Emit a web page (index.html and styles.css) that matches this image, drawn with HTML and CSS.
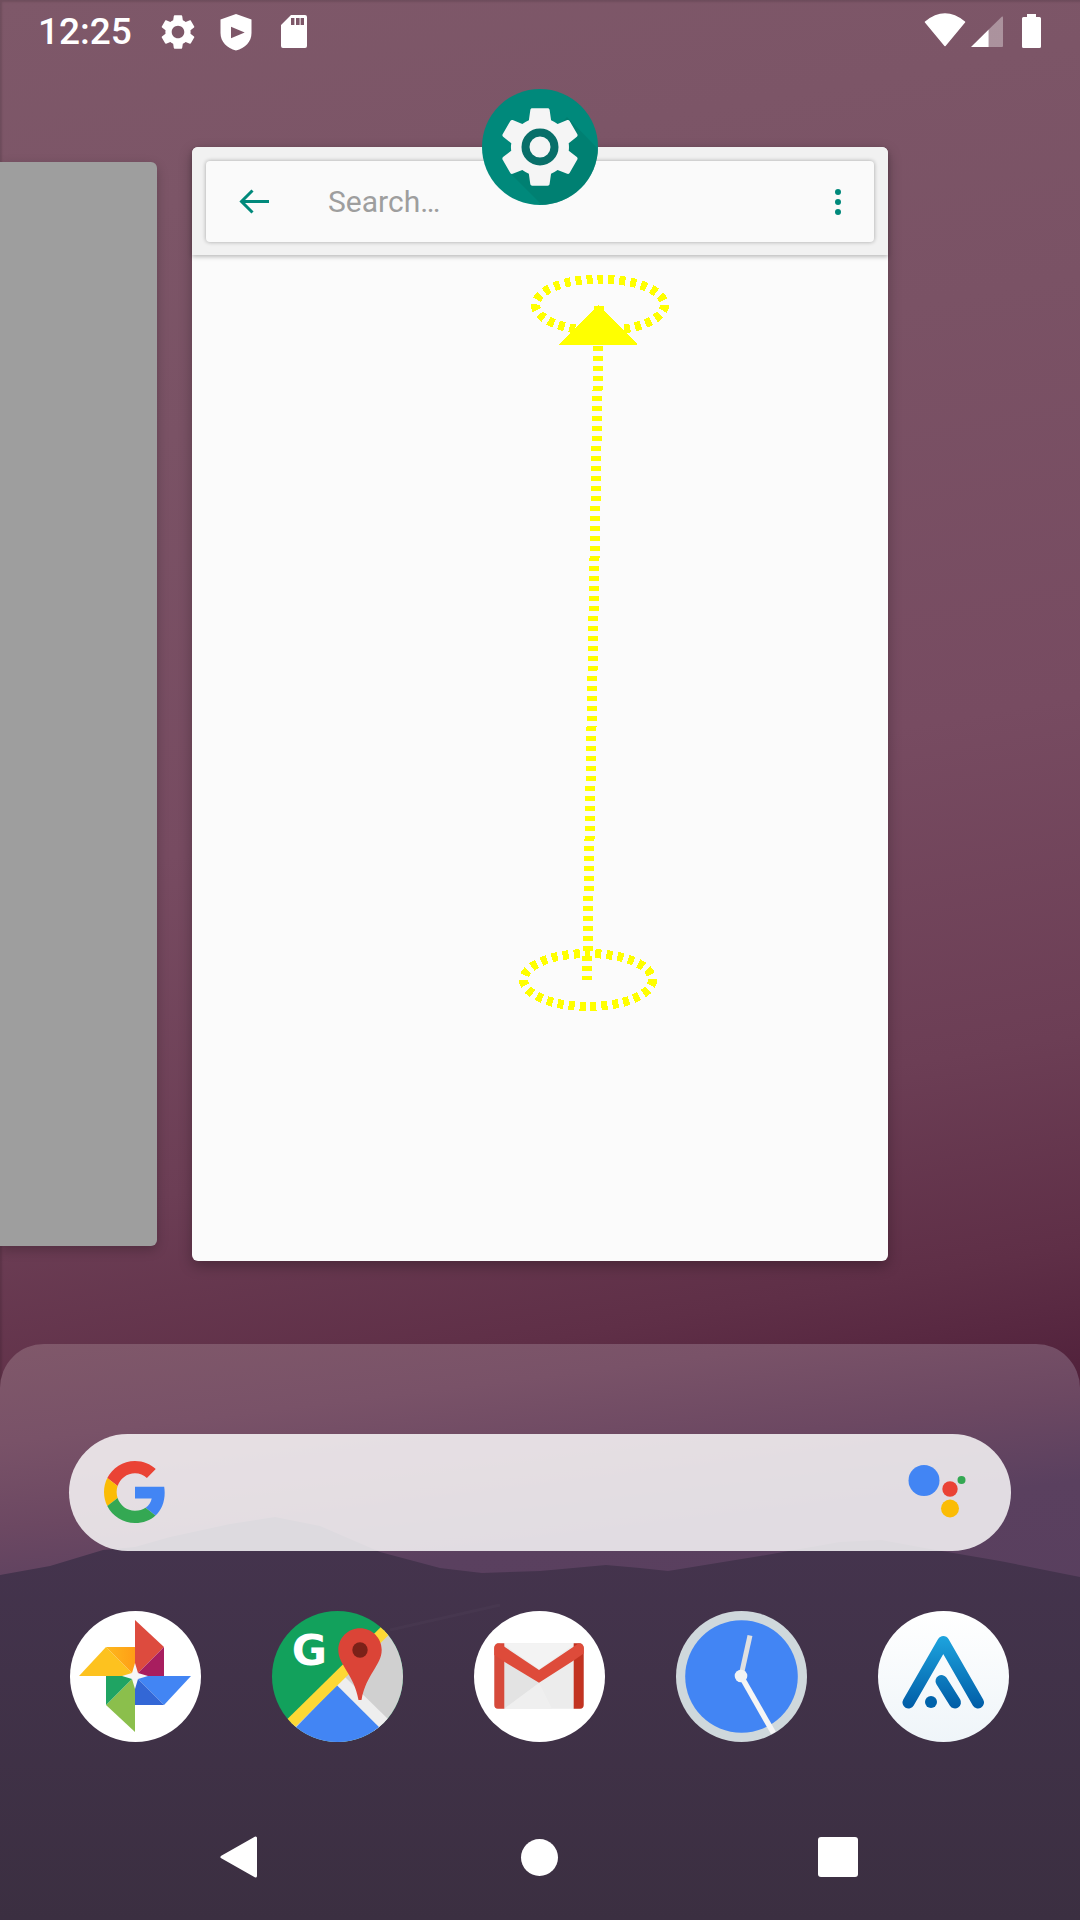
FILE: index.html
```html
<!DOCTYPE html>
<html lang="en">
<head>
<meta charset="utf-8">
<title>Recents</title>
<link rel="stylesheet" href="styles.css">
</head>
<body>
<div class="screen">
  <header class="status">
    <span class="time">12:25</span>
    <div class="status-icons">
      <svg class="icon42" viewBox="0 0 24 24"><path fill="#fff" d="M19.14 12.94c.04-.3.06-.61.06-.94 0-.32-.02-.64-.07-.94l2.03-1.58c.18-.14.23-.41.12-.61l-1.92-3.32c-.12-.22-.37-.29-.59-.22l-2.39.96c-.5-.38-1.03-.7-1.62-.94l-.36-2.54c-.04-.24-.24-.41-.48-.41h-3.84c-.24 0-.43.17-.47.41l-.36 2.54c-.59.24-1.13.57-1.62.94l-2.39-.96c-.22-.08-.47 0-.59.22L2.74 8.87c-.12.21-.08.47.12.61l2.03 1.58c-.05.3-.09.63-.09.94s.02.64.07.94l-2.03 1.58c-.18.14-.23.41-.12.61l1.92 3.32c.12.22.37.29.59.22l2.39-.96c.5.38 1.03.7 1.62.94l.36 2.54c.05.24.24.41.48.41h3.84c.24 0 .44-.17.47-.41l.36-2.54c.59-.24 1.13-.56 1.62-.94l2.39.96c.22.08.47 0 .59-.22l1.92-3.32c.12-.22.07-.47-.12-.61l-2.01-1.58zM12 15.6c-1.98 0-3.6-1.62-3.6-3.6s1.62-3.6 3.6-3.6 3.6 1.62 3.6 3.6-1.62 3.6-3.6 3.6z"/></svg>
      <svg class="icon42" viewBox="0 0 42 42"><path fill="#fff" fill-rule="evenodd" d="M21 3L36.5 8.500V22C36.500 31 30 37 21 39.500C12 37 5.500 31 5.500 22V8.500ZM16 15.700V27.300L29.700 21.500Z"/></svg>
      <svg class="icon42" viewBox="0 0 42 42"><path fill="#fff" fill-rule="evenodd" d="M18 4H32a2 2 0 0 1 2 2V35a2 2 0 0 1-2 2H10a2 2 0 0 1-2-2V14ZM18 7v7h3.400V7ZM23 7v7h3.600V7ZM27.600 7v7H31V7Z"/></svg>
    </div>
    <div class="status-right">
      <svg class="wifi" viewBox="0 0 46 42"><path fill="#fff" stroke="#fff" stroke-width="1.500" stroke-linejoin="round" d="M3.500 11Q23 -5 42.500 11L23 34.500Z"/></svg>
      <svg class="signal" viewBox="0 0 36 42"><path fill="#fff" d="M2 36L19.700 18.500V36Z"/><path fill="#fff" opacity=".36" d="M19.700 18.500L33 5.500Q34 5 34 6.500V35Q34 36 33 36H19.700Z"/></svg>
      <svg class="battery" viewBox="0 0 24 42"><path fill="#fff" d="M7 3H16V6H19.500a1.500 1.500 0 0 1 1.500 1.500V35.500a1.500 1.500 0 0 1-1.500 1.500H3.500a1.500 1.500 0 0 1-1.500-1.500V7.500a1.500 1.500 0 0 1 1.500-1.500H7Z"/></svg>
    </div>
  </header>

  <main class="recents">
    <div class="side-card"></div>
    <section class="card">
      <div class="card-head">
        <div class="searchbar">
          <svg class="back" viewBox="0 0 30 26"><path fill="none" stroke="#00897b" stroke-width="3" d="M30 12.500H3M13.500 1.500L2.500 12.500L13.500 23.500"/></svg>
          <span class="hint">Search…</span>
          <svg class="more" viewBox="0 0 6 26"><circle cx="3" cy="3" r="3" fill="#00897b"/><circle cx="3" cy="13" r="3" fill="#00897b"/><circle cx="3" cy="23" r="3" fill="#00897b"/></svg>
        </div>
      </div>
      <div class="card-body"></div>
      <svg class="gesture" viewBox="0 0 696 1114" shape-rendering="crispEdges">
        <ellipse class="ring" cx="408" cy="158" rx="64.500" ry="26"/>
        <ellipse class="ring" cx="396" cy="833" rx="64.500" ry="26.500"/>
        <line class="trail" x1="407" y1="159" x2="395" y2="833"/>
        <polygon class="head" points="406.500,158 367,198 446,198"/>
      </svg>
      <div class="app-badge">
        <svg viewBox="0 0 116 116">
          <defs><clipPath id="badgeClip"><circle cx="58" cy="58" r="58"/></clipPath></defs>
          <circle cx="58" cy="58" r="58" fill="#00897b"/>
          <polygon points="85,28 116,60 116,116 60,116 30,86" fill="#00796b" opacity=".55" clip-path="url(#badgeClip)"/>
          <g transform="translate(9.600 9.600) scale(4.030)">
            <path fill="#f5f5f5" d="M19.14 12.94c.04-.3.06-.61.06-.94 0-.32-.02-.64-.07-.94l2.03-1.58c.18-.14.23-.41.12-.61l-1.92-3.32c-.12-.22-.37-.29-.59-.22l-2.39.96c-.5-.38-1.03-.7-1.62-.94l-.36-2.54c-.04-.24-.24-.41-.48-.41h-3.84c-.24 0-.43.17-.47.41l-.36 2.54c-.59.24-1.13.57-1.62.94l-2.39-.96c-.22-.08-.47 0-.59.22L2.74 8.87c-.12.21-.08.47.12.61l2.03 1.58c-.05.3-.09.63-.09.94s.02.64.07.94l-2.03 1.58c-.18.14-.23.41-.12.61l1.92 3.32c.12.22.37.29.59.22l2.39-.96c.5.38 1.03.7 1.62.94l.36 2.54c.05.24.24.41.48.41h3.84c.24 0 .44-.17.47-.41l.36-2.54c.59-.24 1.13-.56 1.62-.94l2.39.96c.22.08.47 0 .59-.22l1.92-3.32c.12-.22.07-.47-.12-.61l-2.01-1.58z"/>
          </g>
          <circle cx="58" cy="58" r="14.500" fill="none" stroke="#086f69" stroke-width="8"/>
        </svg>
      </div>
    </section>
  </main>

  <section class="dock">
    <svg class="mountains" viewBox="0 0 1080 576">
      <defs><linearGradient id="hill" x1="0" y1="0" x2="0" y2="1"><stop offset="0" stop-color="#45344e"/><stop offset="1" stop-color="#3b2f41"/></linearGradient></defs>
      <path fill="url(#hill)" d="M0 231L50 222L103 206L135 203L170 193L230 180L275 173L320 182L380 208L440 224L482 229L540 227L606 221L640 224L668 227L760 212L840 198L881 196L930 205L1000 217L1080 233V576H0Z"/>
      <line x1="390" y1="286" x2="500" y2="261" stroke="#fff" stroke-opacity=".025" stroke-width="3"/>
    </svg>
    <div class="google-bar">
      <svg class="g-logo" viewBox="0 0 48 48">
        <path fill="#EA4335" d="M24 9.500c3.540 0 6.710 1.220 9.210 3.600l6.850-6.850C35.900 2.380 30.470 0 24 0 14.620 0 6.510 5.380 2.560 13.220l7.980 6.190C12.430 13.720 17.740 9.500 24 9.500z"/>
        <path fill="#4285F4" d="M46.980 24.550c0-1.570-.15-3.090-.38-4.550H24v9.020h12.940c-.58 2.960-2.260 5.480-4.780 7.180l7.730 6c4.510-4.180 7.090-10.360 7.090-17.650z"/>
        <path fill="#FBBC05" d="M10.530 28.590c-.48-1.450-.76-2.990-.76-4.590s.27-3.140.76-4.590l-7.980-6.190C.92 16.460 0 20.120 0 24c0 3.880.92 7.540 2.560 10.780l7.970-6.190z"/>
        <path fill="#34A853" d="M24 48c6.480 0 11.930-2.130 15.890-5.810l-7.730-6c-2.150 1.450-4.920 2.300-8.160 2.300-6.260 0-11.570-4.220-13.470-9.910l-7.980 6.190C6.510 42.620 14.620 48 24 48z"/>
      </svg>
      <svg class="assistant" viewBox="0 0 65 58">
        <circle cx="19" cy="16.500" r="15.500" fill="#4285f4"/>
        <circle cx="45" cy="25" r="7.700" fill="#ea4335"/>
        <circle cx="45" cy="44.500" r="9" fill="#fbbc05"/>
        <circle cx="56.500" cy="16" r="4" fill="#34a853"/>
      </svg>
    </div>

    <div class="apps">
      <svg class="app" viewBox="0 0 131 131">
        <defs><linearGradient id="orange" x1="0" y1="0" x2="1" y2="0"><stop offset="0" stop-color="#fdb81c"/><stop offset="1" stop-color="#ff9e16"/></linearGradient></defs>
        <circle cx="65.500" cy="65.500" r="65.500" fill="#fff"/>
        <polygon points="65,9 94,36 65,65" fill="#dd4b3e"/>
        <polygon points="94,36 94,65 65,65" fill="#a81e5f"/>
        <polygon points="65,65 121,65 94,94" fill="#4285f4"/>
        <polygon points="65,65 94,94 65,94" fill="#3367d6"/>
        <polygon points="65,65 65,121 36,94" fill="#8bbf4c"/>
        <polygon points="36,65 65,65 36,94" fill="#1fa463"/>
        <polygon points="9,65 36,36 65,65" fill="#fdc21f"/>
        <polygon points="36,36 65,36 65,65" fill="url(#orange)"/>
        <path fill="#f6f6f6" d="M65 52L68 62L78 65L68 68L65 78L62 68L52 65L62 62Z"/>
      </svg>

      <svg class="app" viewBox="0 0 131 131">
        <defs><clipPath id="mapClip"><circle cx="65.500" cy="65.500" r="65.500"/></clipPath></defs>
        <g clip-path="url(#mapClip)">
          <rect width="131" height="131" fill="#12a15c"/>
          <polygon points="131,0 131,131 0,131" fill="#d0d0d0"/>
          <polygon points="64.700,74 73,66 120,112 106,125" fill="#eeeeee"/>
          <polygon points="64.700,74 10,131 122,131" fill="#4285f4"/>
          <line x1="4" y1="127" x2="125" y2="8" stroke="#fdd835" stroke-width="11"/>
          <path fill="#db4437" d="M88 17.300c12 0 21.700 9.700 21.700 21.700 0 15-15.500 24-20.200 50h-3c-4.500-26-20.200-35-20.200-50 0-12 9.700-21.700 21.700-21.700z"/>
          <circle cx="88" cy="39" r="7.700" fill="#7b2118"/>
          <text class="maps-g" x="37.500" y="53.500">G</text>
        </g>
      </svg>

      <svg class="app" viewBox="0 0 131 131">
        <circle cx="65.500" cy="65.500" r="65.500" fill="#fff"/>
        <path fill="#ececec" d="M24 32.300H106a3.700 3.700 0 0 1 3.700 3.700V94a3.700 3.700 0 0 1-3.700 3.700H24a3.700 3.700 0 0 1-3.700-3.700V36a3.700 3.700 0 0 1 3.700-3.700Z"/>
        <polygon points="28,32.300 102,32.300 65,58" fill="#f3f3f3"/>
        <polygon points="30.300,50 65,72 30.300,97.700" fill="#e3e3e3"/>
        <polygon points="30.300,97.700 65,72 78,97.700" fill="#efefef"/>
        <path fill="#d64a3b" d="M20.300 37a4.700 4.700 0 0 1 4.700-4.700H30.300V97.700H24a3.700 3.700 0 0 1-3.700-3.700Z"/>
        <path fill="#c23321" d="M109.700 37a4.700 4.700 0 0 0-4.700-4.700H99.700V97.700H106a3.700 3.700 0 0 0 3.700-3.700Z"/>
        <path fill="#de4b3a" d="M20.300 37Q21 31 26 32.800L65 59L104 32.800Q109 31 109.700 37V42.500L99.700 49.500L65 71.700L30.300 50.700L20.300 44Z"/>
      </svg>

      <svg class="app" viewBox="0 0 131 131">
        <circle cx="65.500" cy="65.500" r="65.500" fill="#cfd8dc"/>
        <circle cx="65.500" cy="65.500" r="56.300" fill="#4285f4"/>
        <line x1="65" y1="65" x2="74" y2="24.500" stroke="#e0e0e0" stroke-width="5"/>
        <line x1="65" y1="65" x2="97.500" y2="122" stroke="#f5f5f5" stroke-width="5.500"/>
        <circle cx="65" cy="65" r="6.300" fill="#f1f3f4"/>
      </svg>

      <svg class="app" viewBox="0 0 131 131">
        <defs>
          <linearGradient id="arcBg" x1="0" y1="0" x2="0" y2="1"><stop offset="0" stop-color="#ffffff"/><stop offset="1" stop-color="#eff5f9"/></linearGradient>
          <linearGradient id="arcA" gradientUnits="userSpaceOnUse" x1="0" y1="24" x2="0" y2="98"><stop offset="0" stop-color="#1ea5df"/><stop offset="1" stop-color="#005ca6"/></linearGradient>
        </defs>
        <circle cx="65.500" cy="65.500" r="65.500" fill="url(#arcBg)"/>
        <path fill="none" stroke="url(#arcA)" stroke-width="12" stroke-linecap="round" stroke-linejoin="round" d="M30.500 91.500L65.300 31L100 91.500"/>
        <path fill="none" stroke="url(#arcA)" stroke-width="12" stroke-linecap="round" d="M63.500 70L77 91.500"/>
        <circle cx="53" cy="91" r="6" fill="#0063ab"/>
      </svg>
    </div>

    <nav class="nav">
      <svg class="nav-back" viewBox="0 0 37 42"><path fill="#fff" stroke="#fff" stroke-width="3" stroke-linejoin="round" d="M35.500 2V40L2 21Z"/></svg>
      <div class="nav-home"></div>
      <div class="nav-recent"></div>
    </nav>
  </section>
</div>
</body>
</html>
```

FILE: styles.css
```css
* { box-sizing: border-box; }
html, body { margin: 0; padding: 0; }

.screen {
  position: relative;
  width: 1080px;
  height: 1920px;
  overflow: hidden;
  display: flex;
  flex-direction: column;
  font-family: Roboto, "Liberation Sans", sans-serif;
  background: linear-gradient(170deg, #7e5869 0%, #7a5265 22%, #774b61 42%, #6c3e55 58%, #5f2f47 68%, #52223c 74%, #52223c 100%);
  box-shadow: inset 2px 2px 2px rgba(0, 0, 0, .12);
}

/* status bar */
.status {
  height: 63px;
  flex: none;
  display: flex;
  align-items: center;
  padding: 0 36px 0 38px;
}
.time {
  color: #fff;
  font-size: 37px;
  font-weight: 500;
  line-height: 42px;
  width: 92px;
  margin-right: 27px;
  padding-top: 1px;
}
.status-icons { display: flex; gap: 16px; }
.icon42 { width: 42px; height: 42px; display: block; }
.status-right { margin-left: auto; display: flex; align-items: center; }
.wifi { width: 46px; height: 42px; display: block; }
.signal { width: 36px; height: 42px; display: block; margin-left: 1px; margin-right: 15px; }
.battery { width: 24px; height: 42px; display: block; }

/* recents */
.recents {
  flex: none;
  margin-top: 84px;
  height: 1114px;
  display: flex;
  align-items: center;
  gap: 35px;
}
.side-card {
  width: 157px;
  height: 1084px;
  background: #9e9e9e;
  border-radius: 0 6px 6px 0;
  box-shadow: 0 4px 12px rgba(0, 0, 0, .22);
}
.card {
  position: relative;
  width: 696px;
  height: 1114px;
  display: flex;
  flex-direction: column;
  border-radius: 6px;
  background: #fbfbfb;
  box-shadow: 0 5px 14px rgba(0, 0, 0, .28);
}
.card-head {
  height: 108px;
  flex: none;
  padding: 14px;
  background: #f1f1f1;
  border-radius: 6px 6px 0 0;
  box-shadow: 0 2px 4px rgba(0, 0, 0, .25);
}
.searchbar {
  height: 81px;
  display: flex;
  align-items: center;
  padding: 0 33px;
  background: #fafafa;
  border-radius: 4px;
  box-shadow: 0 0 4px rgba(0, 0, 0, .32);
}
.back { width: 30px; height: 26px; display: block; flex: none; }
.hint {
  margin-left: 59px;
  font-size: 30px;
  line-height: 40px;
  color: #9e9e9e;
}
.more { width: 6px; height: 26px; display: block; flex: none; margin-left: auto; }
.card-body { flex: 1; }
.gesture {
  position: absolute;
  left: 0;
  top: 0;
  width: 696px;
  height: 1114px;
}
.ring {
  fill: none;
  stroke: #ffff00;
  stroke-width: 9;
  stroke-dasharray: 6 5;
}
.trail {
  stroke: #ffff00;
  stroke-width: 10;
  stroke-dasharray: 5 5;
}
.head { fill: #ffff00; }
.app-badge {
  position: absolute;
  left: 290px;
  top: -58px;
  width: 116px;
  height: 116px;
}
.app-badge svg { width: 116px; height: 116px; display: block; }

/* dock */
.dock {
  position: relative;
  flex: 1;
  margin-top: 83px;
  display: flex;
  flex-direction: column;
  padding-top: 90px;
  border-radius: 44px 44px 0 0;
  overflow: hidden;
  background: linear-gradient(173deg, #80586a 0%, #795268 14%, #6c4862 26%, #5a405f 38%, #553d5c 100%);
}
.mountains {
  position: absolute;
  left: 0;
  top: 0;
  width: 1080px;
  height: 576px;
}
.google-bar {
  position: relative;
  height: 117px;
  flex: none;
  margin: 0 69px;
  display: flex;
  align-items: center;
  justify-content: space-between;
  padding: 0 41px 0 35px;
  border-radius: 59px;
  background: rgba(255, 255, 255, .82);
}
.g-logo { width: 62px; height: 62px; display: block; margin-bottom: 2px; }
.assistant { width: 65px; height: 58px; display: block; }

.apps {
  position: relative;
  flex: none;
  display: flex;
  gap: 71px;
  margin-top: 60px;
  padding-left: 70px;
}
.app { width: 131px; height: 131px; display: block; flex: none; }
.maps-g {
  font-family: "DejaVu Sans", Roboto, sans-serif;
  font-weight: 700;
  font-size: 43px;
  fill: #fff;
  text-anchor: middle;
}

.nav {
  position: relative;
  flex: none;
  height: 126px;
  margin-top: auto;
  display: flex;
  align-items: center;
  padding-left: 220px;
}
.nav-back { width: 37px; height: 42px; display: block; flex: none; }
.nav-home {
  width: 37px;
  height: 37px;
  flex: none;
  margin: 0 260px 0 264px;
  border-radius: 50%;
  background: #fff;
}
.nav-recent {
  width: 40px;
  height: 40px;
  flex: none;
  border-radius: 3px;
  background: #fff;
}
```
